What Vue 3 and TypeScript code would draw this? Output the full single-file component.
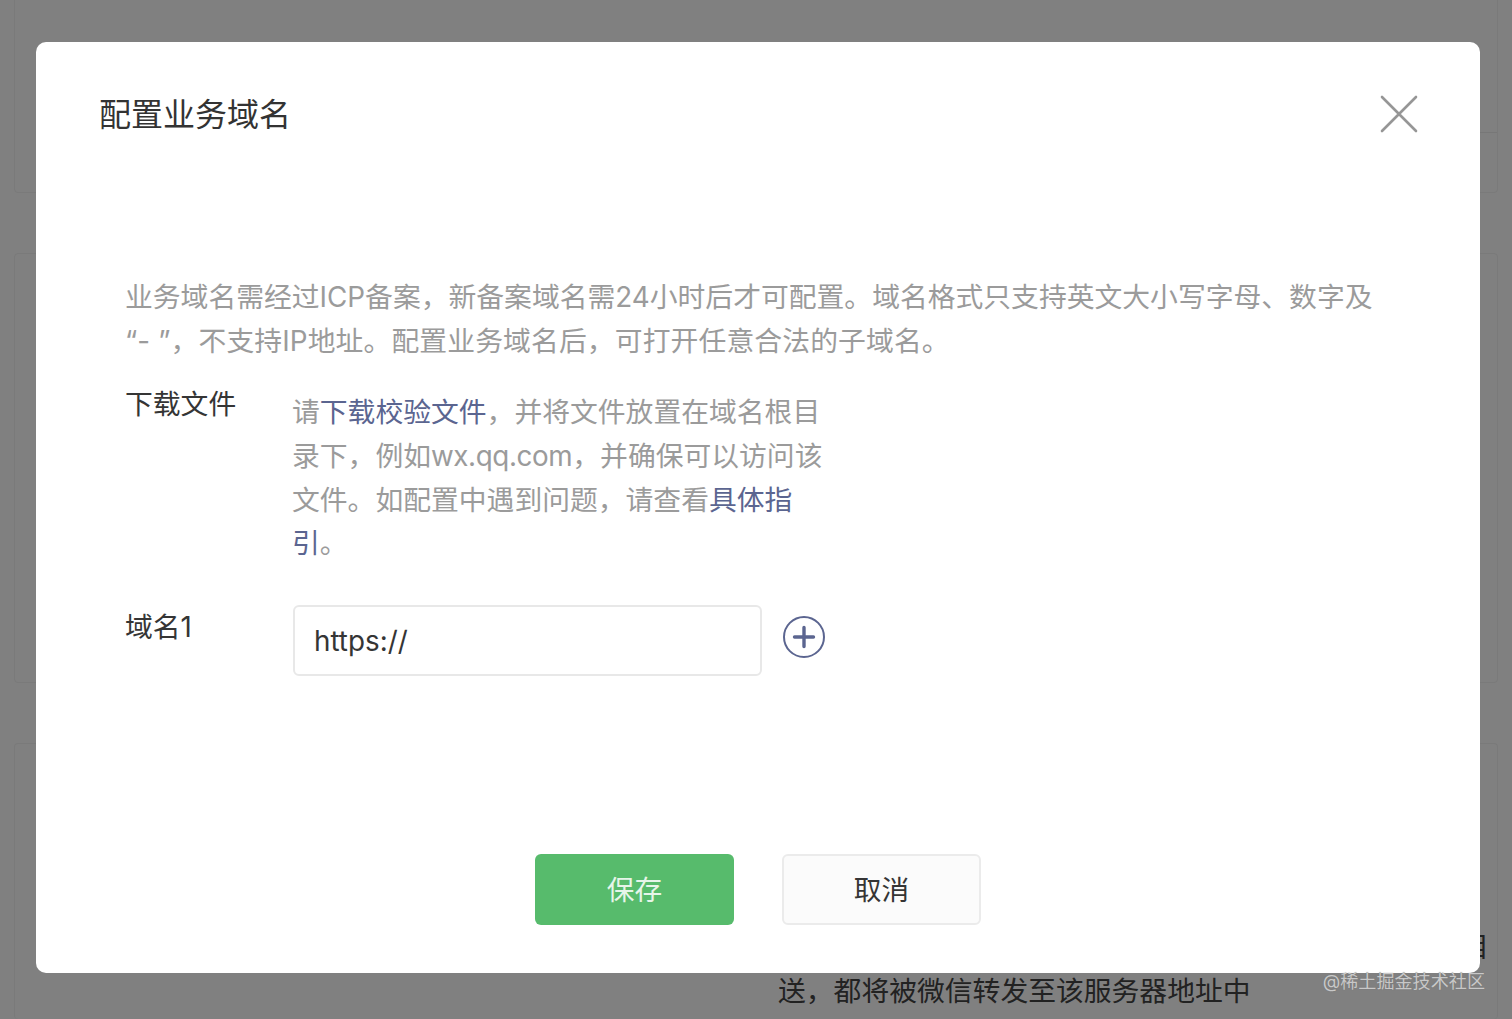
<script setup lang="ts">
const leadLines: string[] = [
  '业务域名需经过ICP备案，新备案域名需24小时后才可配置。域名格式只支持英文大小写字母、数字及',
  '“- ”，不支持IP地址。配置业务域名后，可打开任意合法的子域名。',
]
</script>

<template>
  <div class="page">
    <div class="backdrop">
      <div class="card card-top"></div>
      <div class="card card-mid"></div>
      <div class="card card-low">
        <div class="bg-text">
          <p class="bg-cut">目</p>
          <p>送，都将被微信转发至该服务器地址中</p>
        </div>
      </div>
    </div>
    <div class="dialog">
      <header class="head">
        <h2 class="title">配置业务域名</h2>
        <svg class="close" viewBox="0 0 38 38" width="38" height="38" fill="none" stroke="#969696" stroke-width="2.6" stroke-linecap="round">
          <path d="M2 2 L36 36 M36 2 L2 36" />
        </svg>
      </header>
      <div class="body">
        <div class="lead">
          <p v-for="line in leadLines" :key="line">{{ line }}</p>
        </div>
        <div class="row row-file">
          <div class="label">下载文件</div>
          <div class="desc">请<span class="link">下载校验文件</span>，并将文件放置在域名根目录下，例如<span class="tight">wx.qq.com</span>，并确保可以访问该文件。如配置中遇到问题，请查看<span class="link">具体指引</span>。</div>
        </div>
        <div class="row row-domain">
          <div class="label">域名1</div>
          <div class="input">https://</div>
          <svg class="plus" viewBox="0 0 42 42" width="42" height="42" fill="none" stroke="#5b6590">
            <circle cx="21" cy="21" r="20" stroke-width="2" />
            <path d="M11.5 21 H30.5 M21 11.5 V30.5" stroke-width="3.4" stroke-linecap="round" />
          </svg>
        </div>
      </div>
      <footer class="foot">
        <div class="btn primary">保存</div>
        <div class="btn plain">取消</div>
      </footer>
    </div>
    <div class="mark">@稀土掘金技术社区</div>
  </div>
</template>

<style>
html, body { margin: 0; background: #7f7f7f; }
</style>

<style scoped>
.page {
  position: relative;
  width: 1512px;
  height: 1019px;
  overflow: hidden;
  background: #808080;
  font-family: "Inter", "Noto Sans CJK SC", "Liberation Sans", sans-serif;
}
p { margin: 0; }
.backdrop {
  display: flex;
  flex-direction: column;
  gap: 60px;
  padding: 0 14px;
  height: 100%;
  box-sizing: border-box;
}
.card {
  border: 1px solid #7a7a7a;
  border-radius: 4px;
  box-sizing: border-box;
  flex: none;
}
.card-top { height: 197px; margin-top: -4px; position: relative; }
.card-top::after {
  content: "";
  position: absolute;
  left: 1440px;
  right: 0;
  top: 135px;
  border-top: 1px solid #777;
}
.card-mid { height: 430px; }
.card-low { flex: 1; border-bottom: 0; position: relative; }
.bg-text {
  position: absolute;
  left: 763px;
  top: 181px;
  width: 711px;
  font-size: 27.8px;
  line-height: 44px;
  color: #222;
}
.bg-cut { text-align: right; }
.dialog {
  position: absolute;
  left: 36px;
  top: 42px;
  width: 1444px;
  height: 931px;
  background: #fff;
  border-radius: 10px;
  display: flex;
  flex-direction: column;
  box-sizing: border-box;
}
.head {
  display: flex;
  justify-content: space-between;
  align-items: center;
  padding: 52px 62px 0 63px;
  height: 38px;
}
.title {
  margin: 4px 0 0;
  font-size: 32px;
  line-height: 38px;
  font-weight: 400;
  color: #333;
}
.close { margin-top: 2px; }
.body {
  flex: 1;
  padding: 0 89px;
  font-size: 27.8px;
  line-height: 44px;
  color: #9b9b9b;
  margin-top: 143px;
}
.lead p:last-child { letter-spacing: 0.12px; }
.row { display: flex; color: #333; }
.row-file { margin-top: 19px; }
.label { width: 168px; flex: none; color: #353535; }
.desc { width: 536px; margin-left: -1px; color: #9b9b9b; padding-top: 9px; line-height: 43.8px; }
.link { color: #5b6590; }
.tight { letter-spacing: -0.4px; }
.row-domain { margin-top: 39px; align-items: flex-start; }
.input {
  width: 469px;
  height: 71px;
  border: 2px solid #e8e8e8;
  border-radius: 6px;
  box-sizing: border-box;
  padding-left: 19px;
  line-height: 69px;
  color: #353535;
}
.plus { margin: 11px 0 0 21px; flex: none; }
.foot {
  display: flex;
  justify-content: center;
  gap: 48px;
  padding: 0 0 48px;
}
.btn {
  width: 199px;
  height: 71px;
  border-radius: 6px;
  box-sizing: border-box;
  font-size: 27.7px;
  line-height: 73px;
  text-align: center;
}
.primary { background: #57bb6c; color: #e6f5e9; }
.plain { background: #fbfbfb; border: 2px solid #ebebeb; color: #353535; line-height: 69px; }
.mark {
  position: absolute;
  right: 27px;
  top: 968px;
  font-size: 18.1px;
  line-height: 26px;
  color: #c8c8c8;
  text-shadow: 0 0 1px #6e6e6e;
}
</style>
